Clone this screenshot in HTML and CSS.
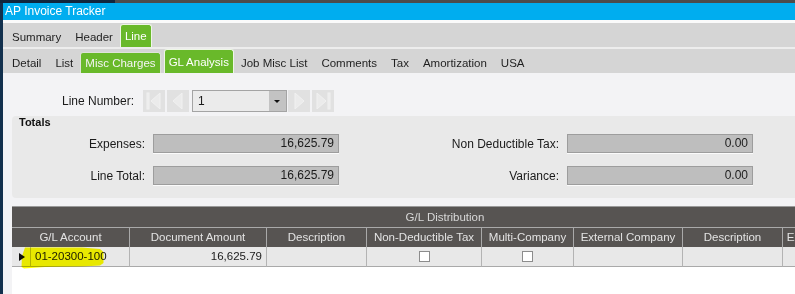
FILE: index.html
```html
<!DOCTYPE html>
<html lang="en">
<head>
  <meta charset="UTF-8" />
  <title>AP Invoice Tracker</title>
  <link rel="stylesheet" href="styles.css">
</head>
<body>
  <!-- franja del escritorio por encima de la ventana -->
  <div class="desktop-strip"></div>

  <div class="window">
    <div class="titlebar">AP Invoice Tracker</div>

    <!-- Pestañas principales -->
    <nav class="tabbar main-tabs">
      <span class="tab">Summary</span>
      <span class="tab">Header</span>
      <span class="tab active">Line</span>
    </nav>

    <!-- Pestañas de la línea -->
    <nav class="tabbar sub-tabs">
      <span class="tab">Detail</span>
      <span class="tab">List</span>
      <span class="tab marked">Misc Charges</span>
      <span class="tab active">GL Analysis</span>
      <span class="tab">Job Misc List</span>
      <span class="tab">Comments</span>
      <span class="tab">Tax</span>
      <span class="tab">Amortization</span>
      <span class="tab">USA</span>
    </nav>

    <main class="panel">
      <!-- Navegador de líneas -->
      <div class="line-row">
        <span class="line-label">Line Number:</span>
        <button class="nav-btn" aria-label="First">
          <svg width="22" height="22" viewBox="0 0 22 22"><rect x="4" y="3" width="2" height="16"/><polygon points="17,3 17,19 8,11"/></svg>
        </button>
        <button class="nav-btn" aria-label="Previous">
          <svg width="22" height="22" viewBox="0 0 22 22"><polygon points="15,3 15,19 6,11"/></svg>
        </button>
        <div class="combo">
          <span class="combo-value">1</span>
          <span class="combo-drop"></span>
        </div>
        <button class="nav-btn" aria-label="Next">
          <svg width="22" height="22" viewBox="0 0 22 22"><polygon points="7,3 7,19 16,11"/></svg>
        </button>
        <button class="nav-btn" aria-label="Last">
          <svg width="22" height="22" viewBox="0 0 22 22"><polygon points="5,3 5,19 14,11"/><rect x="16" y="3" width="2" height="16"/></svg>
        </button>
      </div>

      <!-- Totales -->
      <section class="group">
        <h2 class="group-title">Totals</h2>
        <div class="totals">
          <span class="field-label">Expenses:</span>
          <span class="field">16,625.79</span>
          <span class="field-label">Non Deductible Tax:</span>
          <span class="field">0.00</span>
          <span class="field-label">Line Total:</span>
          <span class="field">16,625.79</span>
          <span class="field-label">Variance:</span>
          <span class="field">0.00</span>
        </div>
      </section>

      <!-- Distribución contable -->
      <section class="grid">
        <div class="grid-caption">G/L Distribution</div>

        <div class="hcell span2">G/L Account</div>
        <div class="hcell">Document Amount</div>
        <div class="hcell">Description</div>
        <div class="hcell">Non-Deductible Tax</div>
        <div class="hcell">Multi-Company</div>
        <div class="hcell">External Company</div>
        <div class="hcell">Description</div>
        <div class="hcell">External Account</div>

        <div class="cell indicator"><span class="row-arrow"></span></div>
        <div class="cell">01-20300-100</div>
        <div class="cell num">16,625.79</div>
        <div class="cell"></div>
        <div class="cell center"><span class="check"></span></div>
        <div class="cell center"><span class="check"></span></div>
        <div class="cell"></div>
        <div class="cell"></div>
        <div class="cell"></div>

        <!-- marca amarilla hecha a mano sobre la cuenta -->
        <svg class="highlight" width="100" height="70" viewBox="0 0 100 70">
          <polygon points="13,40.5 70,40.5 88,42 91.5,45 91.5,56 88,58.5 70,59.5 33,60 12,61.5 9.5,60 10,49"/>
        </svg>
      </section>
    </main>
  </div>
</body>
</html>
```

FILE: styles.css
```css
/* Reset básico */
*, *::before, *::after {
  box-sizing: border-box;
  margin: 0;
  padding: 0;
}

body {
  width: 795px;
  height: 294px;
  overflow: hidden;
  background: #f3f3f5;
  font-family: "Liberation Sans", Arial, sans-serif;
  font-size: 12px;
  color: #1b1b1b;
}

/* Franja superior del escritorio */
.desktop-strip {
  height: 3px;
  background: linear-gradient(to right, #10263d 0, #10263d 115px, #4c4c4c 115px);
}

.window {
  border-left: 3px solid #12304d;
  height: 291px;
}

/* Barra de título */
.titlebar {
  height: 17px;
  line-height: 17px;
  padding-left: 2px;
  background: #00adef;
  color: #fff;
  font-size: 12px;
}

/* Barras de pestañas */
.tabbar {
  display: flex;
  height: 27px;
  padding-left: 2px;
  background: #d5d5d5;
  font-size: 11.5px;
}
.main-tabs {
  border-top: 3px solid #fafafa;
}
.sub-tabs {
  height: 26px;
  border-top: 2px solid #ededed;
}
.tab {
  display: flex;
  align-items: center;
  padding: 3px 7px 0;
  color: #1f1f1f;
  white-space: nowrap;
}
.tab.active,
.tab.marked {
  padding: 0 4px;
  background: #69b92a;
  color: #fff;
  border: 1px solid #eef6e6;
  border-bottom: none;
  border-radius: 3px 3px 0 0;
}
.main-tabs .tab.active {
  margin-top: 1px;
}
.tab.marked {
  margin-top: 3px;
  margin-right: 3px;
  color: #f4f4f4;
  border-color: #dfe3da;
}

/* Panel de contenido */
.panel {
  padding: 17px 0 0 9px;
}

.line-row {
  display: flex;
  align-items: center;
  height: 22px;
}
.line-label {
  width: 122px;
  margin-right: 9px;
  text-align: right;
}
.nav-btn {
  width: 22px;
  height: 22px;
  margin-right: 2px;
  border: none;
  background: #e1e1e1;
}
.nav-btn svg {
  display: block;
  fill: #ebebeb;
  stroke: #f1f1f1;
  stroke-width: 1;
}
.combo {
  display: flex;
  width: 95px;
  height: 22px;
  margin: 0 1px;
  border: 1px solid #a4a4a4;
  background: #ebebeb;
}
.combo-value {
  flex: 1;
  padding-left: 5px;
  line-height: 20px;
}
.combo-drop {
  position: relative;
  width: 17px;
  background: #c3c3c3;
}
.combo-drop::after {
  content: "";
  position: absolute;
  left: 5px;
  top: 9px;
  border-left: 3px solid transparent;
  border-right: 3px solid transparent;
  border-top: 3px solid #111;
}

/* Caja de totales */
.group {
  height: 82px;
  margin-top: 4px;
  padding-left: 7px;
  background: #e9e9e9;
  border-radius: 4px 0 0 4px;
}
.group-title {
  font-size: 11px;
  font-weight: bold;
  line-height: 12px;
  color: #111;
}
.totals {
  display: grid;
  grid-template-columns: 126px 186px 212px 186px;
  grid-auto-rows: 19px;
  column-gap: 8px;
  row-gap: 13px;
  margin-top: 6px;
  align-items: center;
}
.field-label {
  text-align: right;
}
.field {
  height: 19px;
  line-height: 17px;
  padding-right: 4px;
  text-align: right;
  background: #bebebe;
  border: 1px solid #9d9d9d;
  box-shadow: 0 1px 0 #fbfbfb;
}

/* Rejilla G/L */
.grid {
  position: relative;
  display: grid;
  grid-template-columns: 19px 99px 137px 100px 115px 92px 109px 100px 95px;
  width: 866px;
  height: 100px;
  margin-top: 8px;
  align-content: start;
  background: #fff;
  border-top: 1px solid #9a9a9a;
  font-size: 11.5px;
}
.grid-caption {
  grid-column: 1 / -1;
  height: 20px;
  line-height: 20px;
  text-align: center;
  background: #575452;
  color: #d8d8d8;
}
.hcell {
  height: 20px;
  line-height: 19px;
  text-align: center;
  white-space: nowrap;
  overflow: hidden;
  background: #575452;
  color: #e3e3e3;
  border-top: 1px solid #a9a9a9;
  border-right: 1px solid #a9a9a9;
}
.hcell.span2 {
  grid-column: span 2;
}
.cell {
  height: 20px;
  line-height: 19px;
  padding-left: 4px;
  background: #e8e8e8;
  border-right: 1px solid #b3b3b3;
  border-bottom: 1px solid #a9a9a9;
  color: #1a1a1a;
}
.cell.num {
  padding: 0 4px 0 0;
  text-align: right;
}
.cell.center {
  display: flex;
  align-items: center;
  justify-content: center;
  padding: 0 0 1px;
}
.cell.indicator {
  padding: 6px 0 0 7px;
}
.row-arrow {
  display: block;
  width: 0;
  height: 0;
  border-top: 4px solid transparent;
  border-bottom: 4px solid transparent;
  border-left: 6px solid #111;
}
.check {
  width: 11px;
  height: 11px;
  background: #fff;
  border: 1px solid #8c8c8c;
}

/* Resaltado amarillo encima de la celda */
.highlight {
  position: absolute;
  left: 0;
  top: 0;
  fill: #ffff00;
  mix-blend-mode: multiply;
  pointer-events: none;
}
```
